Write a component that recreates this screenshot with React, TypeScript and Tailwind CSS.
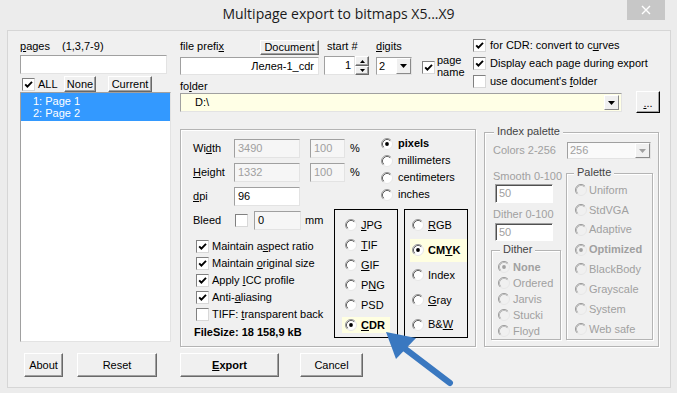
import React from "react";

type P = { children?: React.ReactNode; className?: string };

const U = ({ children }: P) => <span className="underline">{children}</span>;

function Check({ checked = false }: { checked?: boolean }) {
  return (
    <span className="inline-flex w-[13px] h-[13px] shrink-0 bg-white border border-t-[#808080] border-l-[#808080] border-r-[#d8d8d8] border-b-[#d8d8d8] items-center justify-center">
      {checked && (
        <svg width="9" height="9" viewBox="0 0 9 9">
          <path d="M1.2 4.3 L3.4 6.6 L8 1.8" fill="none" stroke="#000" strokeWidth="1.9" />
        </svg>
      )}
    </span>
  );
}

function Radio({ checked = false, disabled = false }: { checked?: boolean; disabled?: boolean }) {
  return (
    <svg width="12" height="12" viewBox="0 0 12 12" className="shrink-0">
      <circle cx="6" cy="6" r="5.5" fill={disabled ? "#f0f0f0" : "#fff"} stroke="#e6e6e6" />
      <path d="M2.11 9.89 A5.5 5.5 0 0 1 9.89 2.11" fill="none" stroke="#9a9a9a" />
      <path d="M2.82 9.18 A4.5 4.5 0 0 1 9.18 2.82" fill="none" stroke={disabled ? "#b8b8b8" : "#555"} strokeWidth="0.9" />
      {checked && <circle cx="6" cy="6" r="1.9" fill={disabled ? "#a0a0a0" : "#000"} />}
    </svg>
  );
}

function Btn({ children, className = "" }: P) {
  return (
    <div
      className={
        "flex items-center justify-center shrink-0 bg-[#f0f0f0] border border-t-white border-l-white border-r-[#696969] border-b-[#696969] shadow-[inset_-1px_-1px_0_#a0a0a0] " +
        className
      }
    >
      {children}
    </div>
  );
}

function Field({ children, className = "" }: P) {
  return (
    <div
      className={
        "flex items-center shrink-0 border border-t-[#a0a0a0] border-l-[#a0a0a0] border-r-[#e3e3e3] border-b-[#e3e3e3] " +
        className
      }
    >
      {children}
    </div>
  );
}

function DeepField({ children, className = "" }: P) {
  return (
    <div
      className={
        "flex items-center shrink-0 border border-t-[#a0a0a0] border-l-[#a0a0a0] border-r-white border-b-white shadow-[inset_1px_1px_0_#505050] " +
        className
      }
    >
      {children}
    </div>
  );
}

function DropBtn({ disabled = false }: { disabled?: boolean }) {
  return (
    <div className="w-[15px] h-full shrink-0 bg-[#f0f0f0] border border-t-white border-l-white border-r-[#8a8a8a] border-b-[#8a8a8a] flex items-center justify-center">
      <svg width="7" height="4" viewBox="0 0 7 4">
        <path d="M0 0h7L3.5 4z" fill={disabled ? "#a0a0a0" : "#000"} />
      </svg>
    </div>
  );
}

function CheckRow({ checked, children }: { checked?: boolean; children: React.ReactNode }) {
  return (
    <div className="h-[17px] flex items-start">
      <Check checked={checked} />
      <span className="ml-[3px] leading-[13px]">{children}</span>
    </div>
  );
}

function GroupTitle({ children, className = "" }: P) {
  return (
    <span className={"absolute top-[-8px] px-[3px] bg-[#f0f0f0] leading-[13px] text-[#444] " + className}>
      {children}
    </span>
  );
}

const groupCls =
  "relative border border-[#b4b4b4] shadow-[inset_1px_1px_0_#fff,1px_1px_0_#fff]";

export default function App() {
  return (
    <div className="relative w-[677px] h-[393px] overflow-hidden bg-[#ececec] text-[11px] text-black font-['Liberation_Sans',Arial,sans-serif]">
      {/* title bar */}
      <div className="h-[30px] flex">
        <div className="w-[627px] pl-[50px] pt-[4px] text-center leading-[20px] text-[14px] text-[#1a1a1a] font-['Open_Sans','Noto_Sans',sans-serif]">
          Multipage export to bitmaps X5...X9
        </div>
        <div className="w-[38px] h-[20px] bg-[#c7c7c7] flex items-center justify-center">
          <svg width="10" height="10" viewBox="0 0 10 10">
            <path d="M1 1L9 9M9 1L1 9" stroke="#fff" strokeWidth="1.4" />
          </svg>
        </div>
      </div>

      {/* content */}
      <div className="ml-[7px] w-[664px] h-[358px] border border-[#d6d6d6] bg-[#f0f0f0] flex flex-col">
        <div className="flex h-[316px]">
          {/* left column */}
          <div className="ml-[12px] w-[151px] flex flex-col">
            <div className="mt-[9px] h-[13px] leading-[13px] flex">
              <span>
                <U>p</U>ages
              </span>
              <span className="ml-[12px]">(1,3,7-9)</span>
            </div>
            <Field className="mt-[2px] w-[147px] h-[19px] bg-white" />
            <div className="mt-[2px] h-[16px] flex items-center">
              <span className="ml-[2px] flex">
                <Check checked />
              </span>
              <span className="ml-[3px] w-[26px] leading-[13px]">ALL</span>
              <Btn className="w-[32px] h-[16px]">None</Btn>
              <Btn className="ml-[12px] w-[44px] h-[16px]">Current</Btn>
            </div>
            <Field className="w-[151px] h-[250px] bg-white !items-start">
              <div className="w-full bg-[#3399ff] text-white pt-[2px] pb-[2px]">
                <div className="h-[12px] leading-[12px] pl-[12px]">1: Page 1</div>
                <div className="h-[12px] leading-[12px] pl-[12px]">2: Page 2</div>
              </div>
            </Field>
          </div>

          {/* right column */}
          <div className="ml-[9px] w-[480px] flex flex-col">
            <div className="flex">
              {/* block A */}
              <div className="w-[293px] flex flex-col">
                <div className="mt-[9px] h-[35px] flex">
                  <div className="w-[139px] flex flex-col">
                    <div className="h-[16px] flex items-start">
                      <span className="flex-1 leading-[13px]">
                        file prefi<U>x</U>
                      </span>
                      <Btn className="w-[59px] h-[15px]">Document</Btn>
                    </div>
                    <Field className="mt-[1px] h-[18px] bg-white justify-end pr-[4px]">
                      <span className="font-['Liberation_Sans','DejaVu_Sans',sans-serif]">Лелея-1_cdr</span>
                    </Field>
                  </div>
                  <div className="ml-[5px] w-[45px] flex flex-col">
                    <div className="h-[16px] pl-[3px] leading-[13px]">start #</div>
                    <div className="flex h-[19px]">
                      <Field className="w-[31px] h-[19px] bg-white justify-end pr-[3px]">1</Field>
                      <div className="w-[14px] h-[19px] flex flex-col">
                        <Btn className="h-[10px] w-[14px]">
                          <svg width="5" height="3" viewBox="0 0 5 3">
                            <path d="M0 3h5L2.5 0z" fill="#000" />
                          </svg>
                        </Btn>
                        <Btn className="h-[9px] w-[14px]">
                          <svg width="5" height="3" viewBox="0 0 5 3">
                            <path d="M0 0h5L2.5 3z" fill="#000" />
                          </svg>
                        </Btn>
                      </div>
                    </div>
                  </div>
                  <div className="ml-[7px] w-[36px] flex flex-col">
                    <div className="h-[16px] leading-[13px]">
                      <U>d</U>igits
                    </div>
                    <Field className="mt-[1px] h-[18px] w-[36px] bg-white">
                      <span className="flex-1 pl-[2px]">2</span>
                      <DropBtn />
                    </Field>
                  </div>
                  <div className="ml-[10px] h-[35px] flex">
                    <div className="mt-[20px]">
                      <Check checked />
                    </div>
                    <div className="ml-[2px] mt-[14px] leading-[12px]">
                      <div>page</div>
                      <div>name</div>
                    </div>
                  </div>
                </div>
                <div className="mt-[5px] h-[12px] leading-[12px]">
                  fo<U>l</U>der
                </div>
              </div>
              {/* block B */}
              <div className="mt-[8px] flex flex-col">
                <div className="h-[18px] flex items-start">
                  <Check checked />
                  <span className="ml-[4px] leading-[13px]">
                    for CDR: convert to c<U>u</U>rves
                  </span>
                </div>
                <div className="h-[18px] flex items-start">
                  <Check checked />
                  <span className="ml-[4px] leading-[13px]">Display each page during export</span>
                </div>
                <div className="h-[18px] flex items-start">
                  <Check />
                  <span className="ml-[4px] leading-[13px]">
                    use document's <U>f</U>older
                  </span>
                </div>
              </div>
            </div>

            {/* folder row */}
            <div className="flex">
              <Field className="w-[442px] h-[19px] bg-[#ffffe6] pl-[14px]">
                <span className="flex-1">D:\</span>
                <div className="h-[15px] mr-[2px] flex">
                  <DropBtn />
                </div>
              </Field>
              <Btn className="ml-[14px] -mt-[2px] w-[24px] h-[22px] !border-r-black !border-b-black">
                <span className="leading-[10px] mt-[2px]">
                  <U>.</U>..
                </span>
              </Btn>
            </div>

            {/* groups */}
            <div className="flex mt-[16px]">
              {/* main group */}
              <div className={groupCls + " w-[296px] h-[218px] flex"}>
                <div className="ml-[12px] w-[141px] flex flex-col">
                  <div className="pt-[9px] flex flex-col gap-[5px]">
                    <div className="h-[19px] flex items-center">
                      <span className="w-[41px] shrink-0">
                        Wi<U>d</U>th
                      </span>
                      <Field className="w-[66px] h-[19px] bg-[#f6f6f6] text-[#a0a0a0] pl-[3px]">3490</Field>
                      <Field className="ml-[10px] w-[35px] h-[19px] bg-[#f6f6f6] text-[#a0a0a0] pl-[3px]">100</Field>
                      <span className="ml-[5px] shrink-0">%</span>
                    </div>
                    <div className="h-[19px] flex items-center">
                      <span className="w-[41px] shrink-0">
                        <U>H</U>eight
                      </span>
                      <Field className="w-[66px] h-[19px] bg-[#f6f6f6] text-[#a0a0a0] pl-[3px]">1332</Field>
                      <Field className="ml-[10px] w-[35px] h-[19px] bg-[#f6f6f6] text-[#a0a0a0] pl-[3px]">100</Field>
                      <span className="ml-[5px] shrink-0">%</span>
                    </div>
                    <div className="h-[19px] flex items-center">
                      <span className="w-[41px] shrink-0">
                        <U>d</U>pi
                      </span>
                      <Field className="w-[66px] h-[19px] bg-white pl-[3px]">96</Field>
                    </div>
                    <div className="h-[19px] flex items-center">
                      <span className="w-[42px] shrink-0">Bleed</span>
                      <Check />
                      <Field className="ml-[6px] w-[47px] h-[19px] bg-[#f6f6f6] pl-[3px]">0</Field>
                      <span className="ml-[4px] shrink-0">mm</span>
                    </div>
                  </div>
                  <div className="mt-[10px] ml-[3px] flex flex-col">
                    <CheckRow checked>
                      Maintain a<U>s</U>pect ratio
                    </CheckRow>
                    <CheckRow checked>
                      Maintain <U>o</U>riginal size
                    </CheckRow>
                    <CheckRow checked>
                      Apply <U>I</U>CC profile
                    </CheckRow>
                    <CheckRow checked>
                      Anti-<U>a</U>liasing
                    </CheckRow>
                    <CheckRow>
                      TIFF: <U>t</U>ransparent back
                    </CheckRow>
                  </div>
                  <div className="mt-[1px] ml-[1px] leading-[13px] font-bold whitespace-nowrap">FileSize: 18 158,9 kB</div>
                </div>
                <div className="flex flex-col">
                  <div className="pt-[5px] ml-[47px] flex flex-col">
                    <div className="h-[17px] flex items-center">
                      <Radio checked />
                      <span className="ml-[5px] font-bold">pixels</span>
                    </div>
                    <div className="h-[17px] flex items-center">
                      <Radio />
                      <span className="ml-[5px]">millimeters</span>
                    </div>
                    <div className="h-[17px] flex items-center">
                      <Radio />
                      <span className="ml-[5px]">centimeters</span>
                    </div>
                    <div className="h-[17px] flex items-center">
                      <Radio />
                      <span className="ml-[5px]">inches</span>
                    </div>
                  </div>
                  <div className="flex mt-[6px]">
                    <div className="w-[64px] h-[129px] border border-black pt-[5px] flex flex-col">
                      {[
                        [<><U>J</U>PG</>, false],
                        [<><U>T</U>IF</>, false],
                        [<><U>G</U>IF</>, false],
                        [<>P<U>N</U>G</>, false],
                        [<>PSD</>, false],
                      ].map((r, i) => (
                        <div key={i} className="h-[20px] pl-[7px] flex items-center">
                          <span className="pl-[3px] h-[16px] flex items-center">
                            <Radio />
                            <span className="ml-[4px]">{r[0] as React.ReactNode}</span>
                          </span>
                        </div>
                      ))}
                      <div className="h-[20px] pl-[7px] flex items-center">
                        <span className="pl-[3px] w-[48px] h-[16px] flex items-center bg-[#ffffe1]">
                          <Radio checked />
                          <span className="ml-[4px] font-bold">
                            <U>C</U>DR
                          </span>
                        </span>
                      </div>
                    </div>
                    <div className="ml-[6px] w-[64px] h-[129px] border border-black pt-[3px] flex flex-col">
                      <div className="h-[25px] pl-[5px] flex items-center">
                        <span className="pl-[2px] flex items-center">
                          <Radio />
                          <span className="ml-[4px]">
                            <U>R</U>GB
                          </span>
                        </span>
                      </div>
                      <div className="h-[25px] pl-[5px] flex items-center">
                        <span className="pl-[2px] w-[57px] h-[23px] flex items-center bg-[#ffffe1]">
                          <Radio checked />
                          <span className="ml-[4px] font-bold">
                            CM<U>Y</U>K
                          </span>
                        </span>
                      </div>
                      <div className="h-[25px] pl-[5px] flex items-center">
                        <span className="pl-[2px] flex items-center">
                          <Radio />
                          <span className="ml-[4px]">Index</span>
                        </span>
                      </div>
                      <div className="h-[25px] pl-[5px] flex items-center">
                        <span className="pl-[2px] flex items-center">
                          <Radio />
                          <span className="ml-[4px]">
                            <U>G</U>ray
                          </span>
                        </span>
                      </div>
                      <div className="h-[25px] pl-[5px] flex items-center">
                        <span className="pl-[2px] flex items-center">
                          <Radio />
                          <span className="ml-[4px]">
                            B&amp;<U>W</U>
                          </span>
                        </span>
                      </div>
                    </div>
                  </div>
                </div>
              </div>

              {/* index palette */}
              <div className={groupCls + " ml-[8px] mt-[3px] w-[175px] h-[215px] flex flex-col"}>
                <GroupTitle className="left-[9px]">Index palette</GroupTitle>
                <div className="mt-[9px] h-[17px] flex items-center">
                  <span className="ml-[8px] w-[74px] text-[#a0a0a0]">Colors 2-256</span>
                  <Field className="w-[84px] h-[17px] bg-[#fafafa] text-[#a0a0a0]">
                    <span className="flex-1 pl-[2px]">256</span>
                    <DropBtn disabled />
                  </Field>
                </div>
                <div className="flex">
                  <div className="ml-[6px] w-[70px] flex flex-col">
                    <div className="mt-[11px] pl-[2px] leading-[13px] text-[#a0a0a0] whitespace-nowrap">Smooth 0-100</div>
                    <DeepField className="mt-[1px] ml-[4px] w-[58px] h-[19px] bg-white text-[#a0a0a0] pl-[3px]">50</DeepField>
                    <div className="mt-[5px] pl-[2px] leading-[13px] text-[#a0a0a0] whitespace-nowrap">Dither 0-100</div>
                    <DeepField className="mt-[2px] ml-[4px] w-[58px] h-[18px] bg-white text-[#a0a0a0] pl-[3px]">50</DeepField>
                    <div className={groupCls + " mt-[9px] w-[70px] h-[90px] pt-[8px] flex flex-col"}>
                      <GroupTitle className="left-[8px]">Dither</GroupTitle>
                      {["None", "Ordered", "Jarvis", "Stucki", "Floyd"].map((t, i) => (
                        <div key={t} className="h-[16px] pl-[6px] flex items-center text-[#a0a0a0]">
                          <Radio disabled checked={i === 0} />
                          <span className={"ml-[3px] " + (i === 0 ? "font-bold" : "")}>{t}</span>
                        </div>
                      ))}
                    </div>
                  </div>
                  <div className={groupCls + " ml-[5px] mt-[14px] w-[87px] h-[167px] pt-[6px] flex flex-col"}>
                    <GroupTitle className="left-[7px]">Palette</GroupTitle>
                    {["Uniform", "StdVGA", "Adaptive", "Optimized", "BlackBody", "Grayscale", "System", "Web safe"].map(
                      (t, i) => (
                        <div key={t} className="h-[20px] pl-[8px] flex items-center text-[#a0a0a0]">
                          <Radio disabled checked={i === 3} />
                          <span className={"ml-[2px] " + (i === 3 ? "font-bold" : "")}>{t}</span>
                        </div>
                      )
                    )}
                  </div>
                </div>
              </div>
            </div>
          </div>
        </div>

        {/* bottom buttons */}
        <div className="flex mt-[6px]">
          <Btn className="ml-[16px] w-[39px] h-[24px]">About</Btn>
          <Btn className="ml-[14px] w-[80px] h-[24px]">Reset</Btn>
          <Btn className="ml-[23px] w-[99px] h-[24px] font-bold">
            <span>
              <U>E</U>xport
            </span>
          </Btn>
          <Btn className="ml-[21px] w-[63px] h-[24px]">Cancel</Btn>
        </div>
      </div>

      {/* annotation arrow */}
      <svg className="absolute left-0 top-0 pointer-events-none" width="677" height="393" viewBox="0 0 677 393">
        <path d="M404 348 L450 383" stroke="#3a78c0" strokeWidth="6" strokeLinecap="round" />
        <path d="M386 332 L416 338 L396 359 Z" fill="#3a78c0" />
      </svg>
    </div>
  );
}
